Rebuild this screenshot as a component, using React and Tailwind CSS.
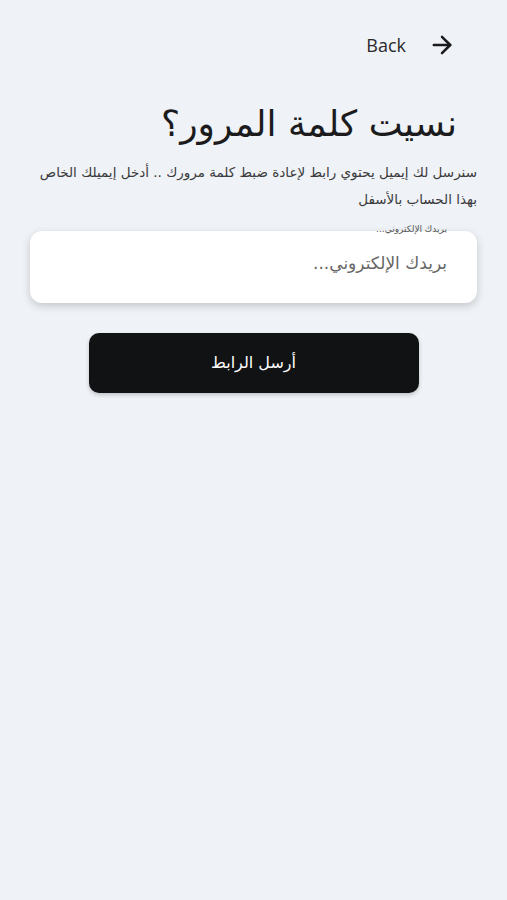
import { ArrowRight } from "lucide-react";

export default function App() {
  return (
    <div
      className="min-h-[900px] bg-[#eff2f6] text-[#1b1b1d]"
      style={{ fontFamily: '"DejaVu Sans", "Noto Sans", sans-serif' }}
    >
      <div className="flex justify-end items-center gap-[22px] pt-[30px] pr-[51px] h-[60px]">
        <span className="text-[18px] text-[#2a2a2c]" style={{ fontFamily: '"Open Sans", sans-serif' }}>
          Back
        </span>
        <ArrowRight className="w-[28px] h-[28px]" strokeWidth={2.2} />
      </div>

      <div dir="rtl" className="px-[30px]">
        <h1 className="mt-[40px] pr-[20px] text-[36px] leading-[48px] font-normal text-[#1b1b1d]">
          نسيت كلمة المرور؟
        </h1>
        <p className="mt-[11px] text-[13.5px] leading-[27px] text-[#3a3a3c]">
          سنرسل لك إيميل يحتوي رابط لإعادة ضبط كلمة مرورك .. أدخل إيميلك الخاص
          <br />
          بهذا الحساب بالأسفل
        </p>

        <div className="relative mt-[18px]">
          <span className="absolute -top-[8px] right-[30px] text-[9px] leading-[12px] text-[#555]">
            بريدك الإلكتروني...
          </span>
          <input
            dir="rtl"
            placeholder="بريدك الإلكتروني..."
            className="w-full h-[72px] rounded-[12px] bg-white px-[30px] pb-[8px] text-[17px] text-[#333] placeholder:text-[#666] shadow-[0_3px_8px_rgba(0,0,0,0.18)] outline-none"
          />
        </div>

        <div className="flex justify-center mt-[30px]">
          <button className="w-[330px] h-[60px] rounded-[10px] bg-[#111214] text-white text-[16px] font-normal shadow-[0_2px_4px_rgba(0,0,0,0.2)]">
            أرسل الرابط
          </button>
        </div>
      </div>
    </div>
  );
}
